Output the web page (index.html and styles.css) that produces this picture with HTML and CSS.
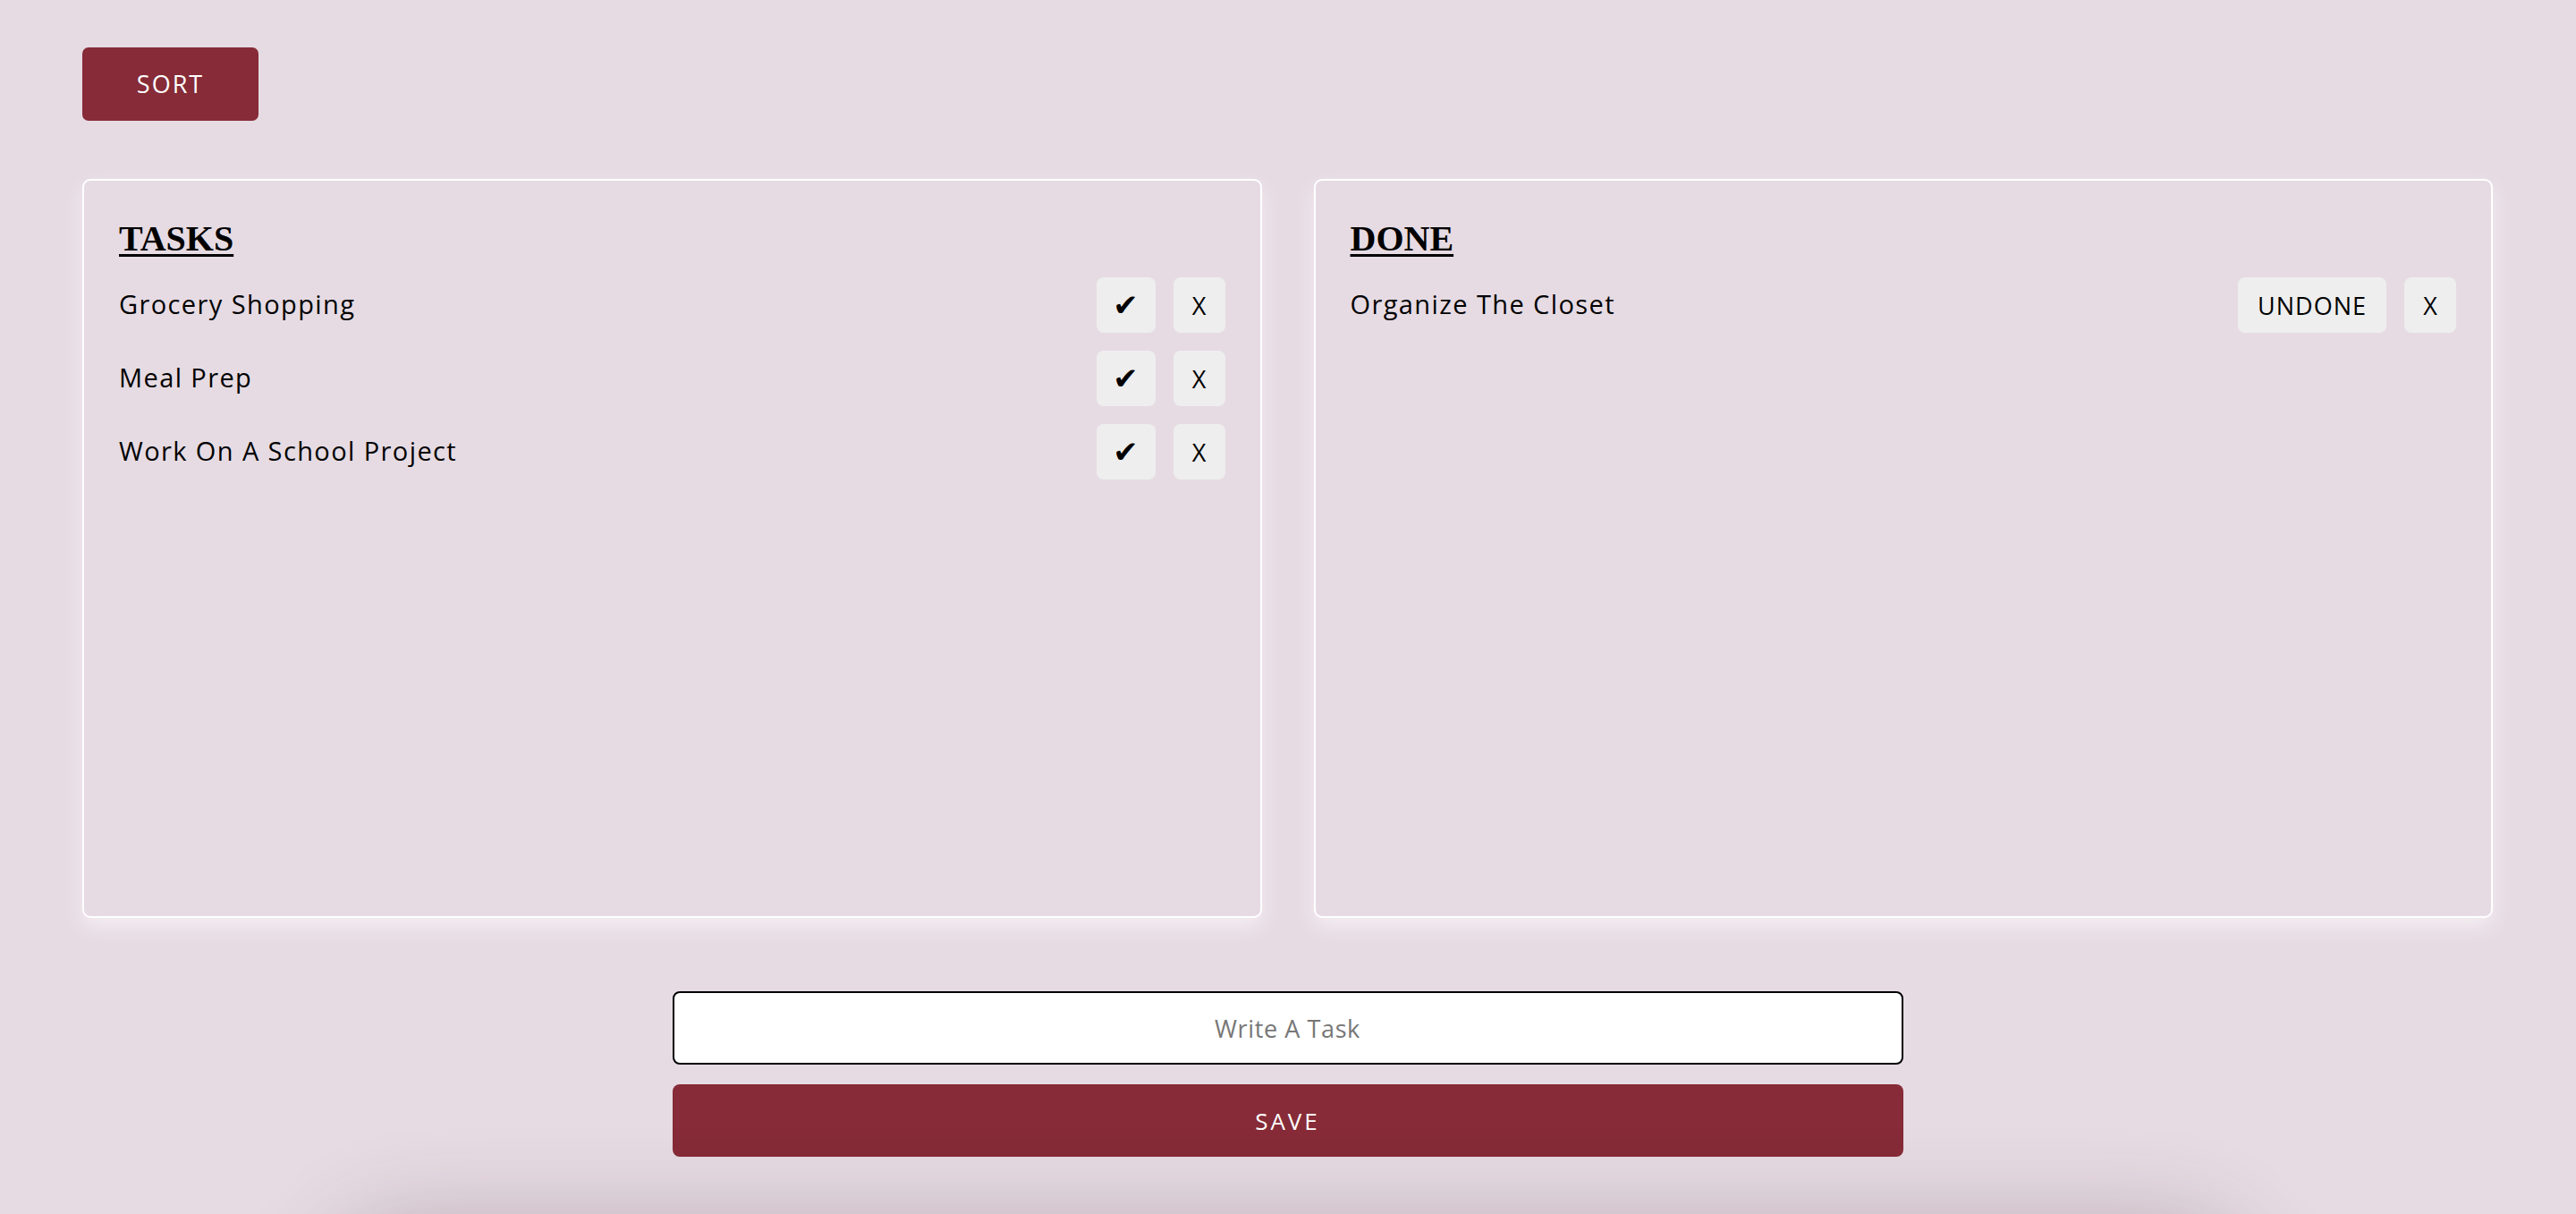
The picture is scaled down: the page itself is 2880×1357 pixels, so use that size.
FILE: index.html
```html
<!DOCTYPE html>
<html lang="en">
<head>
<meta charset="utf-8">
<title>Tasks</title>
<link rel="stylesheet" href="styles.css">
</head>
<body>
<main class="page">
  <div class="toolbar">
    <button class="btn-sort">SORT</button>
  </div>
  <section class="boards">
    <div class="card">
      <h2 class="card-title">TASKS</h2>
      <ul class="list">
        <li class="row">
          <span class="row-text">Grocery Shopping</span>
          <span class="row-actions">
            <button class="btn-small btn-check">&#10004;</button>
            <button class="btn-small">X</button>
          </span>
        </li>
        <li class="row">
          <span class="row-text">Meal Prep</span>
          <span class="row-actions">
            <button class="btn-small btn-check">&#10004;</button>
            <button class="btn-small">X</button>
          </span>
        </li>
        <li class="row">
          <span class="row-text">Work On A School Project</span>
          <span class="row-actions">
            <button class="btn-small btn-check">&#10004;</button>
            <button class="btn-small">X</button>
          </span>
        </li>
      </ul>
    </div>
    <div class="card">
      <h2 class="card-title">DONE</h2>
      <ul class="list">
        <li class="row">
          <span class="row-text">Organize The Closet</span>
          <span class="row-actions">
            <button class="btn-small btn-undone">UNDONE</button>
            <button class="btn-small">X</button>
          </span>
        </li>
      </ul>
    </div>
  </section>
  <form class="entry" onsubmit="return false">
    <input class="entry-input" type="text" placeholder="Write A Task">
    <button class="btn-save" type="button">SAVE</button>
  </form>
  <div class="shade"></div>
</main>
</body>
</html>
```
FILE: styles.css
```css
html, body {
  margin: 0;
  padding: 0;
  background: #e6dbe3;
}
body {
  font-family: "Open Sans", "Noto Sans", sans-serif;
  color: #000;
  overflow: hidden;
}
.page {
  padding: 53px 93px 0 92px;
  display: flex;
  flex-direction: column;
}
.toolbar {
  display: flex;
}
.btn-sort {
  width: 197px;
  height: 82px;
  padding: 0 0 2px;
  border: none;
  border-radius: 7px;
  background: #862b37;
  color: #fff;
  font-family: "Open Sans", sans-serif;
  font-size: 27px;
  letter-spacing: 2px;
  cursor: pointer;
}
.boards {
  margin-top: 65px;
  display: grid;
  grid-template-columns: 1fr 1fr;
  gap: 58px;
}
.card {
  height: 826px;
  box-sizing: border-box;
  border: 2px solid #fff;
  border-radius: 9px;
  padding: 45px 39px 0 39px;
  box-shadow: 0 10px 22px rgba(255, 255, 255, 0.55);
}
.card-title {
  margin: 0;
  font-family: "Liberation Serif", "Times New Roman", serif;
  font-weight: 700;
  font-size: 40px;
  line-height: 40px;
  text-decoration: underline;
  text-decoration-thickness: 3px;
  text-underline-offset: 4px;
}
.list {
  list-style: none;
  margin: 23px 0 0;
  padding: 0;
  display: flex;
  flex-direction: column;
  gap: 20px;
}
.row {
  display: flex;
  align-items: center;
  justify-content: space-between;
  height: 62px;
}
.row-text {
  font-size: 29px;
  letter-spacing: 1.4px;
  padding-bottom: 3px;
}
.row-actions {
  display: flex;
  gap: 20px;
}
.btn-small {
  height: 62px;
  min-width: 58px;
  padding: 0 20px;
  border: none;
  border-radius: 8px;
  background: #eeeeee;
  color: #000;
  font-family: "Open Sans", sans-serif;
  font-size: 27px;
  cursor: pointer;
}
.btn-check {
  width: 66px;
  padding: 0;
  font-family: "DejaVu Sans", sans-serif;
  font-size: 34px;
  line-height: 1;
}
.btn-undone {
  padding: 0 22px;
  letter-spacing: 1px;
}
.entry {
  margin: 82px auto 0;
  width: 1376px;
  display: flex;
  flex-direction: column;
  gap: 22px;
}
.entry-input {
  height: 82px;
  box-sizing: border-box;
  border: 2px solid #000;
  border-radius: 8px;
  background: #fff;
  text-align: center;
  font-family: "Open Sans", sans-serif;
  font-size: 27px;
  letter-spacing: 0.6px;
  outline: none;
}
.entry-input::placeholder {
  color: #777;
}
.btn-save {
  height: 81px;
  border: none;
  border-radius: 8px;
  background: #862b37;
  color: #fff;
  font-family: "Open Sans", sans-serif;
  font-size: 26px;
  letter-spacing: 3px;
  cursor: pointer;
}
.shade {
  margin: 80px auto 0;
  width: 2150px;
  height: 200px;
  border-radius: 100px;
  box-shadow: 0 0 100px 12px rgba(70, 40, 60, 0.24);
}
```
